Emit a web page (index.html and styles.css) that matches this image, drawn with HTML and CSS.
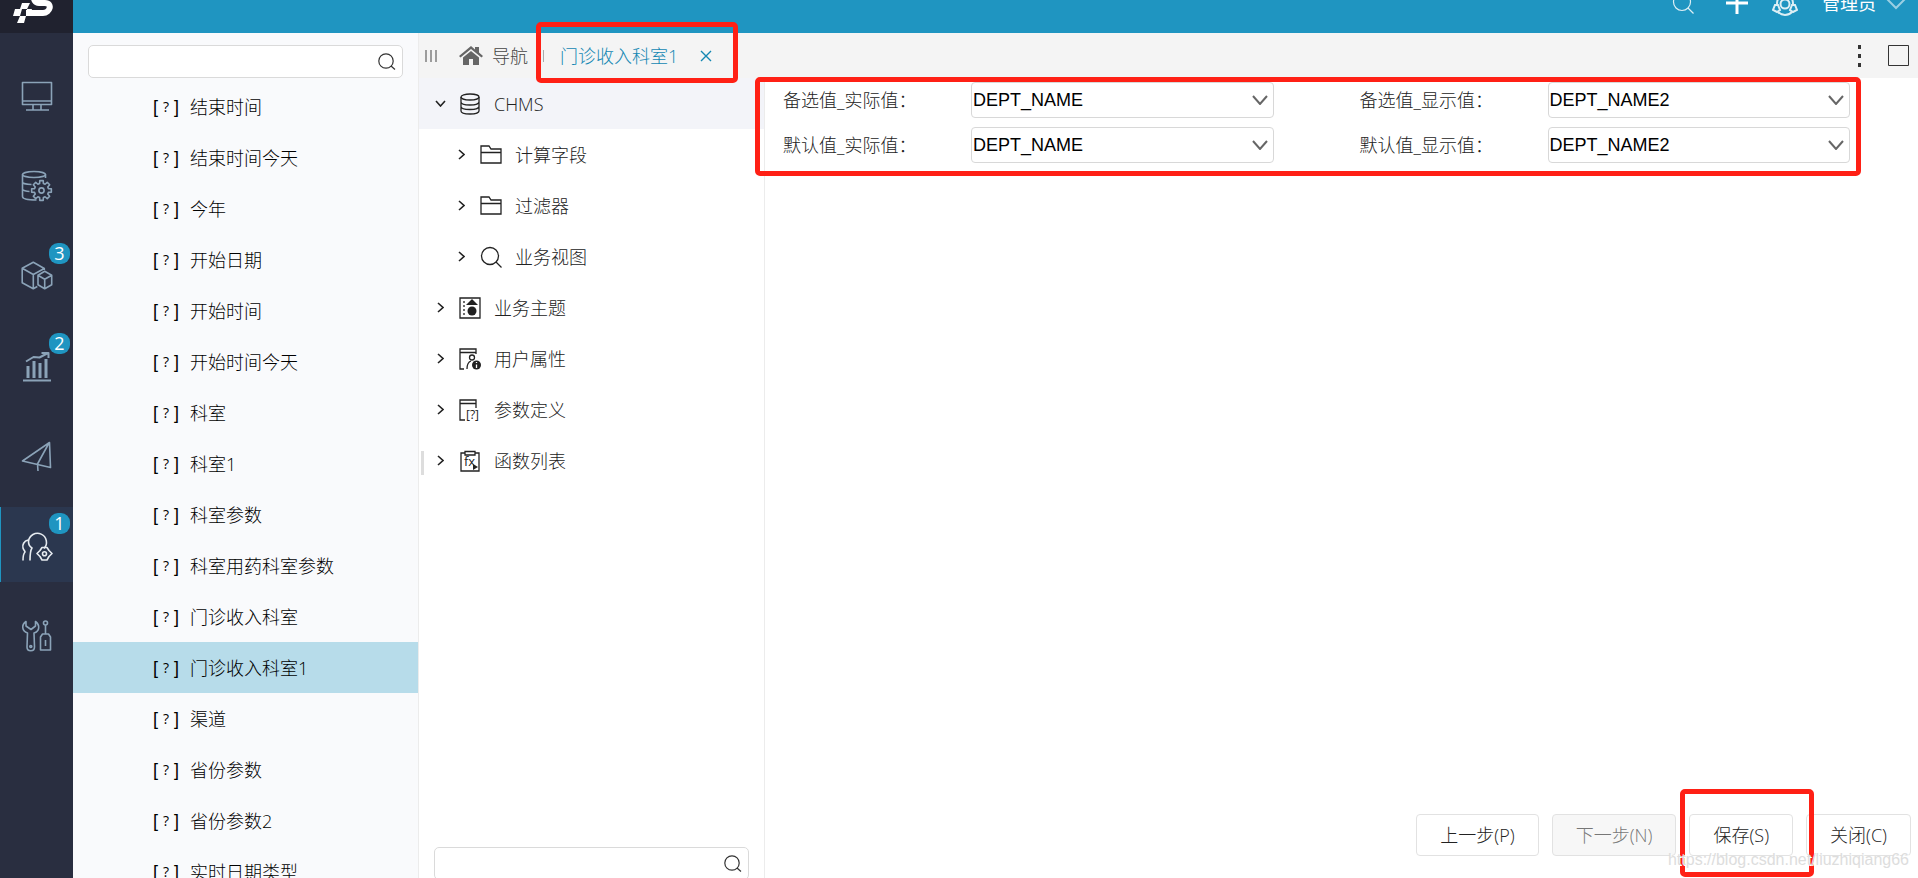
FILE: index.html
```html
<!DOCTYPE html>
<html lang="zh-CN">
<head>
<meta charset="utf-8">
<title>门诊收入科室1</title>
<link rel="stylesheet" href="styles.css">
</head>
<body>
<svg class="defs" aria-hidden="true">
  <symbol id="search" viewBox="0 0 22 22"><circle cx="10" cy="10" r="8.5"/><path d="M16 16l5.5 5.5"/></symbol>
  <symbol id="find" viewBox="0 0 18 18"><circle cx="8" cy="8" r="7.2"/><path d="M13 13l4 3.5"/></symbol>
  <symbol id="chevron" viewBox="0 0 16 10"><path d="M1 1l7 8 7-8"/></symbol>
  <symbol id="right" viewBox="0 0 7 11"><path d="M1 1l5 4.500L1 10"/></symbol>
  <symbol id="down" viewBox="0 0 11 7"><path d="M1 1l4.500 5L10 1"/></symbol>
  <symbol id="folder" viewBox="0 0 22 22"><path d="M1 19V2h8l2 3h10v14zM1 8.500h20"/></symbol>
</svg>
<div class="app">
  <header class="top">
    <a class="logo" href="#" aria-label="首页">
      <svg width="73" height="60" viewBox="0 -27 73 60"><path class="logo-s" d="M52-10H42c-9 0-11 13-3 13h6c8 0 5 10-2 10H26"/><path class="logo-b" d="M22 3h8l-3 6h-7zM15 9h7l-2 7h-7zM20 16h6l-2 7h-7zM27 9h5l-2 7h-4z"/></svg>
    </a>
    <div class="tools">
      <button class="tool" aria-label="搜索"><svg class="line" width="22" height="22"><use href="#search"/></svg></button>
      <button class="tool add" aria-label="新建"><svg width="22" height="22" viewBox="0 0 22 22"><path d="M11 0v22M0 11h22"/></svg></button>
      <button class="tool" aria-label="在线"><svg class="line" width="26" height="26" viewBox="0 0 26 26"><g stroke-width="2"><circle cx="13" cy="14" r="4.500"/><path d="M5 14C5 1 21 1 21 14M6 22c4 4 10 4 14 0"/><path d="M3 15h3l2 5-3 2-4-2zM23 15h-3l-2 5 3 2 4-2z"/></g></svg></button>
      <button class="user">管理员<svg width="22" height="13" viewBox="0 0 22 13"><path d="M1 1l10 10L21 1"/></svg></button>
    </div>
  </header>
  <div class="main">
    <nav class="rail">
      <button aria-label="门户"><svg width="33" height="33" viewBox="0 0 33 33"><path d="M2.500 3.500h29v22h-29zM2.500 22h29M13 26v5M21 26v5M6 31h23"/></svg></button>
      <button aria-label="数据"><svg width="33" height="33" viewBox="0 0 33 33"><ellipse cx="14" cy="5.500" rx="11.500" ry="3"/><path d="M25.500 5.500V9M2.500 5.500v22c0 2 4 3.500 14 3.500M2.500 13c0 1.500 5 2.500 9 2.500M2.500 20c0 1.500 4 2.500 7 2.500"/><g transform="translate(21.500 21.500)"><path d="M6.950-1.900 9.850-1.700v3.400L6.950 1.900 6.260 3.570 8.170 5.760 5.760 8.170 3.570 6.260 1.900 6.950 1.700 9.850h-3.400L-1.900 6.950-3.570 6.260-5.760 8.170-8.170 5.760-6.260 3.570-6.950 1.900-9.850 1.700v-3.400L-6.950-1.900-6.260-3.570-8.170-5.760-5.760-8.170-3.570-6.260-1.900-6.950-1.700-9.850h3.400L1.900-6.950 3.570-6.260 5.760-8.170 8.170-5.760 6.260-3.570z"/><circle r="2.600"/></g></svg></button>
      <button aria-label="模型"><svg width="33" height="33" viewBox="0 0 33 33"><path d="M24.300 11V9.500L13.300 3.300 2.200 9.200v14.500l11.100 6 4-2.200M2.200 9.200l11.100 6.300 11-6M13.300 15.500v14.200M24.700 12.300l-6.700 4v9.500l6.700 3.900 7-3.900v-9.500zM18 16.300l6.700 4 7-4M24.700 20.300v9.400"/></svg><span class="badge">3</span></button>
      <button aria-label="分析"><svg width="33" height="33" viewBox="0 0 33 33"><path stroke-width="3" d="M8 17v12M14 12v17M20 14v15M26 10v19"/><path stroke-width="2" d="M3 31.500h28M6 12.500l7.500-4.500 6 .500L28 4M21.500 4H28.500v5"/></svg><span class="badge">2</span></button>
      <button aria-label="发布"><svg width="33" height="33" viewBox="0 0 33 33"><path d="M29.500 3.500 2.500 22l28 6.500zM29 4 17.500 25l.500 7"/></svg></button>
      <button class="active" aria-label="资源"><svg width="33" height="33" viewBox="0 0 33 33"><path d="M24 19.500a9 9 0 1 0-15.500-7c0 3 1 5 3.500 6.500-2 3-2 8-2 12.500M8 11c-4 1-6 5-5 8 .500 2 2 3 2 4-2 2-2 5-2 8.500"/><path d="M22 18.500h5l2 3 3 3-3 3-2 3.500h-5l-2-3.500-3-3 3-3z"/><circle cx="24.500" cy="24.700" r="2"/></svg><span class="badge">1</span></button>
      <button aria-label="工具"><svg width="33" height="33" viewBox="0 0 33 33"><path d="M6 2.500C1 6 2 12 7.500 14L7 28c0 5 7.500 5 7.500 0L14 14c6-2 6-8 1.500-11.500V7L11 10.500 6 7z"/><circle cx="10.800" cy="27.500" r="1"/><path d="M22.500 15h6l2 3v13h-10V18zM25.500 15V6M25.500 21v6"/><circle cx="25.500" cy="4" r="2"/></svg></button>
    </nav>
    <aside class="params">
      <label class="search"><input type="text" aria-label="搜索参数"><svg width="18" height="18"><use href="#find"/></svg></label>
      <ul class="list">
        <li><button><span class="mark"><i>[</i><b>?</b><i>]</i></span>结束时间</button></li>
        <li><button><span class="mark"><i>[</i><b>?</b><i>]</i></span>结束时间今天</button></li>
        <li><button><span class="mark"><i>[</i><b>?</b><i>]</i></span>今年</button></li>
        <li><button><span class="mark"><i>[</i><b>?</b><i>]</i></span>开始日期</button></li>
        <li><button><span class="mark"><i>[</i><b>?</b><i>]</i></span>开始时间</button></li>
        <li><button><span class="mark"><i>[</i><b>?</b><i>]</i></span>开始时间今天</button></li>
        <li><button><span class="mark"><i>[</i><b>?</b><i>]</i></span>科室</button></li>
        <li><button><span class="mark"><i>[</i><b>?</b><i>]</i></span>科室1</button></li>
        <li><button><span class="mark"><i>[</i><b>?</b><i>]</i></span>科室参数</button></li>
        <li><button><span class="mark"><i>[</i><b>?</b><i>]</i></span>科室用药科室参数</button></li>
        <li><button><span class="mark"><i>[</i><b>?</b><i>]</i></span>门诊收入科室</button></li>
        <li><button class="selected"><span class="mark"><i>[</i><b>?</b><i>]</i></span>门诊收入科室1</button></li>
        <li><button><span class="mark"><i>[</i><b>?</b><i>]</i></span>渠道</button></li>
        <li><button><span class="mark"><i>[</i><b>?</b><i>]</i></span>省份参数</button></li>
        <li><button><span class="mark"><i>[</i><b>?</b><i>]</i></span>省份参数2</button></li>
        <li><button><span class="mark"><i>[</i><b>?</b><i>]</i></span>实时日期类型</button></li>
      </ul>
    </aside>
    <section class="work">
      <div class="tabs">
        <button class="fold" aria-label="收起"><svg width="12" height="12" viewBox="0 0 12 12"><path d="M1 0v12M6 0v12M11 0v12"/></svg></button>
        <button class="tab"><svg class="home" width="24" height="20" viewBox="0 0 24 20"><path d="M12 0 0 10l1.500 1.500L12 3l10.500 8.500L24 10l-4-3.500V1h-4v2.500zM12 5 4 11.500V19h6v-6h4v6h6v-7.500z"/></svg>导航</button>
        <div class="tab current"><button>门诊收入科室1</button><button aria-label="关闭标签"><svg width="12" height="12" viewBox="0 0 12 12"><path d="M1 1l10 10M11 1 1 11"/></svg></button><span class="frame frame-tab"></span></div>
        <div class="tab-tools">
          <button aria-label="更多"><svg width="4" height="22" viewBox="0 0 4 22"><path class="solid" d="M0 0h3v4H0zM0 9h3v4H0zM0 18h3v4H0z"/></svg></button>
          <button aria-label="最大化"><svg width="21" height="21" viewBox="0 0 21 21"><path d="M.5.5h20v20H.5z"/></svg></button>
        </div>
      </div>
      <div class="pane">
        <aside class="tree">
          <div class="tree-body">
            <span class="grip"></span>
            <ul>
              <li><button class="node root"><span class="arrow"><svg width="11" height="7"><use href="#down"/></svg></span><svg class="icon" width="22" height="22" viewBox="0 0 22 22"><ellipse cx="11" cy="4" rx="9" ry="3"/><path d="M2 4v14c0 4 18 4 18 0V4M2 9c0 4 18 4 18 0M2 13.500c0 4 18 4 18 0"/></svg>CHMS</button>
                <ul>
                  <li><button class="node child"><span class="arrow"><svg width="7" height="11"><use href="#right"/></svg></span><svg class="icon" width="22" height="22"><use href="#folder"/></svg>计算字段</button></li>
                  <li><button class="node child"><span class="arrow"><svg width="7" height="11"><use href="#right"/></svg></span><svg class="icon" width="22" height="22"><use href="#folder"/></svg>过滤器</button></li>
                  <li><button class="node child"><span class="arrow"><svg width="7" height="11"><use href="#right"/></svg></span><svg class="icon" width="22" height="22"><use href="#search"/></svg>业务视图</button></li>
                </ul>
              </li>
              <li><button class="node"><span class="arrow"><svg width="7" height="11"><use href="#right"/></svg></span><svg class="icon" width="22" height="22" viewBox="0 0 22 22"><path d="M1 1h20v20H1z"/><path stroke-dasharray="2 2" d="M5 4v15"/><path class="solid" d="M13 2l6 6H7z"/><circle class="solid" cx="13" cy="14" r="4.500"/></svg>业务主题</button></li>
              <li><button class="node"><span class="arrow"><svg width="7" height="11"><use href="#right"/></svg></span><svg class="icon" width="22" height="22" viewBox="0 0 22 22"><path d="M17 6V1H1v20h4M1 4.500h16M8 21c0-4 1-7 4-8"/><circle cx="13" cy="9.500" r="2.500"/><circle class="solid" cx="17.500" cy="17" r="4.500"/><path class="white" d="M17.500 14v1M17.500 16.500V20"/></svg>用户属性</button></li>
              <li><button class="node"><span class="arrow"><svg width="7" height="11"><use href="#right"/></svg></span><svg class="icon" width="22" height="22" viewBox="0 0 22 22"><path d="M17 9V1H1v20h5M1 4.500h16"/><text x="7" y="20" font-size="12">[?]</text></svg>参数定义</button></li>
              <li><button class="node"><span class="arrow"><svg width="7" height="11"><use href="#right"/></svg></span><svg class="icon" width="22" height="22" viewBox="0 0 22 22"><path d="M6 3H2v18h18V3h-4M6 1.500h10V5H6z"/><text x="5" y="16" font-size="13">fx</text><path class="solid" d="M14 14v6l5-3z"/></svg>函数列表</button></li>
            </ul>
          </div>
          <div class="tree-search"><label class="search"><input type="text" aria-label="搜索资源"><svg width="18" height="18"><use href="#find"/></svg></label></div>
        </aside>
        <main class="editor">
          <form class="form">
            <div class="field"><label for="f1">备选值_实际值：</label><span class="drop"><select id="f1"><option>DEPT_NAME</option></select><svg width="16" height="10"><use href="#chevron"/></svg></span></div>
            <div class="field"><label for="f2">备选值_显示值：</label><span class="drop"><select id="f2"><option>DEPT_NAME2</option></select><svg width="16" height="10"><use href="#chevron"/></svg></span></div>
            <div class="field"><label for="f3">默认值_实际值：</label><span class="drop"><select id="f3"><option>DEPT_NAME</option></select><svg width="16" height="10"><use href="#chevron"/></svg></span></div>
            <div class="field"><label for="f4">默认值_显示值：</label><span class="drop"><select id="f4"><option>DEPT_NAME2</option></select><svg width="16" height="10"><use href="#chevron"/></svg></span></div>
            <span class="frame frame-form"></span>
          </form>
          <footer class="actions">
            <button class="btn">上一步(P)</button>
            <button class="btn" disabled>下一步(N)</button>
            <span class="save"><button class="btn">保存(S)</button><span class="frame frame-save"></span></span>
            <button class="btn">关闭(C)</button>
            <span class="watermark">https://blog.csdn.net/liuzhiqiang66</span>
          </footer>
        </main>
      </div>
    </section>
  </div>
</div>
</body>
</html>
```
FILE: styles.css
```css
* { box-sizing: border-box; }
body {
  margin: 0;
  color: #222;
  font: 300 18px/24px "Open Sans", "Noto Sans CJK SC", sans-serif;
}
button { margin: 0; padding: 0; border: 0; background: none; color: inherit; font: inherit; cursor: pointer; }
ul { margin: 0; padding: 0; list-style: none; }
svg { display: block; flex: none; fill: none; stroke: currentColor; }
.defs { position: absolute; width: 0; height: 0; }
.app { display: flex; flex-direction: column; height: 100vh; overflow: hidden; }

.top { display: flex; flex: none; align-items: flex-end; justify-content: space-between; height: 33px; overflow: hidden; background: #1f95c1; color: #fff; }
.logo { width: 73px; height: 60px; background: #20222f; color: #fff; }
.logo-s { stroke-width: 6; }
.logo-b { fill: #fff; stroke: none; }
.tools { display: flex; align-items: center; gap: 24px; height: 60px; padding-right: 11px; }
.line { stroke-width: 1.2; opacity: .85; }
.tool { width: 26px; display: grid; justify-items: center; }
.tool.add { width: 22px; stroke-width: 3; margin-left: 6px; }
.user { display: flex; align-items: center; gap: 9px; font-weight: 400; }
.user svg { stroke-width: 2; opacity: .55; }

.main { display: flex; flex: 1; min-height: 0; }
.rail { display: flex; flex: none; flex-direction: column; gap: 15px; width: 73px; padding-top: 24px; background: #292e40; color: #8ba3b8; }
.rail button { position: relative; display: grid; place-items: center; height: 75px; padding-top: 2px; stroke-width: 2; }
.rail svg { stroke-width: 1.6; stroke-linejoin: round; }
.rail .active { background: #2b374f; color: #e6ebf0; box-shadow: inset 1px 0 #1f95c1; }
.badge { position: absolute; top: 6px; right: 3px; width: 21px; height: 21px; border-radius: 9px; background: #1f95c1; color: #fff; font-weight: 400; line-height: 20px; text-align: center; }

.params { display: flex; flex: none; flex-direction: column; width: 346px; border-right: 1px solid #ececec; background: #f9fafc; color: #000; }
.search { display: flex; flex: none; align-items: center; height: 33px; padding-right: 6px; border: 1px solid #dadada; border-radius: 5px; background: #fff; color: #333; }
.search input { flex: 1; min-width: 0; height: 100%; padding: 0 8px; border: 0; outline: 0; background: none; font: inherit; }
.search svg { stroke-width: 1.2; }
.params .search { margin: 12px 15px 3px; }
.list { overflow: hidden; }
.list button { display: flex; align-items: center; gap: 11px; width: 100%; height: 51px; padding-left: 80px; white-space: nowrap; }
.list .selected { background: #b7dcea; }
.mark { display: flex; align-items: center; justify-content: space-between; width: 26px; }
.mark i { font-style: normal; font-family: "Liberation Sans", sans-serif; }
.mark b { font: 400 14px/20px "Open Sans", sans-serif; }

.work { display: flex; flex: 1; flex-direction: column; min-width: 0; }
.tabs { position: relative; z-index: 1; display: flex; flex: none; align-items: center; height: 45px; padding: 0 9px 0 6px; background: #f4f4f4; color: #444; }
.fold { margin-right: 22px; }
.tab { display: flex; align-items: center; gap: 9px; white-space: nowrap; }
.home { fill: #666; stroke: none; }
.current { position: relative; gap: 22px; margin-left: 15px; color: #1387b3; }
.current::before { width: 1px; height: 12px; margin-right: -6px; background: #aaa; content: ""; }
.current svg { stroke-width: 1.4; }
.tab-tools { display: flex; align-items: center; gap: 26px; margin-left: auto; color: #333; }
.solid { fill: currentColor; stroke: none; }
.white { stroke: #fff; }

.pane { display: flex; flex: 1; min-height: 0; }
.tree { display: flex; flex: none; flex-direction: column; width: 346px; border-right: 1px solid #ececec; background: #fff; }
.tree-body { position: relative; flex: 1; }
.grip { position: absolute; top: 50%; left: 2px; width: 3px; height: 24px; margin-top: -12px; background: #ddd; }
.node { display: flex; align-items: center; width: 100%; height: 51px; padding-left: 15px; }
.node.child { padding-left: 36px; }
.root { background: #f3f4f9; }
.arrow { display: grid; justify-items: center; width: 12px; margin-right: 13px; }
.arrow svg { stroke-width: 1.6; }
.icon { margin-right: 13px; stroke-width: 1.3; }
.icon text { fill: currentColor; stroke: none; font-family: "Open Sans", sans-serif; font-weight: 400; }
.tree-search { flex: none; height: 31px; padding: 0 15px; overflow: hidden; }

.editor { display: flex; flex: 1; flex-direction: column; justify-content: space-between; min-width: 0; background: #fff; }
.form { position: relative; z-index: 2; display: grid; grid-template-columns: 1fr 1fr; row-gap: 9px; padding-top: 4px; }
.field { display: flex; align-items: center; padding: 0 68px 0 18px; }
.field label { flex: none; width: 188px; }
.drop { position: relative; flex: 1; min-width: 0; }
.drop select { display: block; width: 100%; height: 36px; padding: 0 28px 0 1px; border: 1px solid #d8d8d8; border-radius: 4px; appearance: none; background: #fff; color: #000; font: 400 18px/24px "Liberation Sans", sans-serif; }
.drop svg { position: absolute; top: 13px; right: 6px; color: #666; stroke-width: 2; pointer-events: none; }
.actions { position: relative; display: flex; justify-content: flex-end; gap: 13px; padding: 0 7px 22px; }
.btn { height: 42px; padding: 0 23px; border: 1px solid #e2e2e2; border-radius: 4px; background: #fff; white-space: nowrap; }
.btn:disabled { background: #f7f7f7; color: #777; cursor: default; }
.save { position: relative; z-index: 1; }

.frame { position: absolute; border: 5px solid #ff2015; border-radius: 5px; pointer-events: none; }
.frame-tab { inset: -22px -26px -15px -7px; }
.frame-form { inset: -1px 57px -13px -10px; }
.frame-save { inset: -25px -21px -21px -9px; }
.watermark { position: absolute; z-index: 2; right: 9px; bottom: 6px; color: #ddd; font: 400 16px/24px "Liberation Sans", sans-serif; text-shadow: 1px 1px #fff; pointer-events: none; }
```
